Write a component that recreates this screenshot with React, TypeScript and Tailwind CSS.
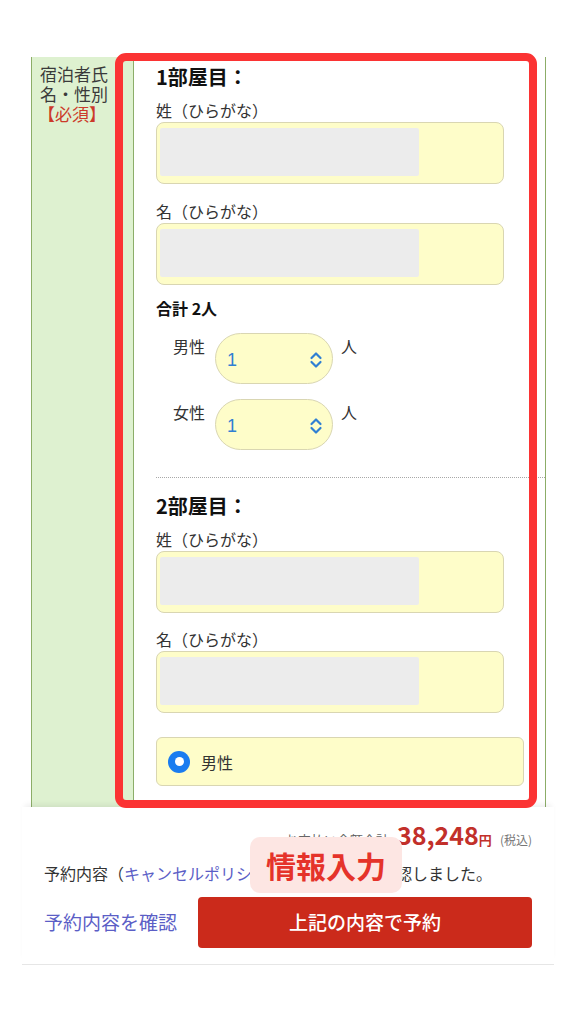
import React from "react";

function NameInput() {
  return (
    <div className="w-[348px] h-[62px] rounded-[8px] border border-[#d9d6b2] bg-[#fefdc9] pl-[3px] pt-[5px]">
      <div className="w-[259px] h-[48px] bg-[#ececec] rounded-[2px]" />
    </div>
  );
}

function Chevrons() {
  return (
    <svg width="14" height="18" viewBox="0 0 14 18" fill="none">
      <path d="M2.5 7 L7 2.5 L11.5 7" stroke="#2f7fd3" strokeWidth="2.2" strokeLinecap="round" strokeLinejoin="round" />
      <path d="M2.5 11 L7 15.5 L11.5 11" stroke="#2f7fd3" strokeWidth="2.2" strokeLinecap="round" strokeLinejoin="round" />
    </svg>
  );
}

function SelectRow({ label, className }: { label: string; className: string }) {
  return (
    <div className={"flex items-start " + className}>
      <div className="ml-[17px] w-[32px] text-[16px] leading-[24px] mt-[1px]">{label}</div>
      <div className="ml-[10px] w-[118px] h-[51px] rounded-full border border-[#d9d6b2] bg-[#fefdc9] flex items-center justify-between pl-[11px] pr-[9px] pt-[3px]">
        <span className="text-[18px] text-[#2f7fd3] font-['Liberation_Sans',sans-serif]">1</span>
        <Chevrons />
      </div>
      <div className="ml-[8px] text-[16px] leading-[24px] mt-[1px]">人</div>
    </div>
  );
}

function Label({ children, className }: { children: React.ReactNode; className: string }) {
  return <div className={"text-[16px] leading-[24px] text-[#333] " + className}>{children}</div>;
}

export default function App() {
  return (
    <div className="relative w-[576px] h-[1024px] bg-white overflow-hidden font-['Noto_Sans_CJK_JP',sans-serif] text-[#333]">
      <div className="h-[57px]" />
      <div className="ml-[31px] w-[515px] h-[750px] overflow-hidden flex border-l border-r border-[#8cad68]">
        <div className="w-[102px] shrink-0 bg-[#def1d0] border-r border-[#8cad68] pl-[8px] pt-[7px] text-[17px] leading-[20px] text-[#3a3a3a]">
          <div>宿泊者氏</div>
          <div>名・性別</div>
          <div className="text-[#cc3a2a] -ml-[2px]">【必須】</div>
        </div>
        <div className="flex-1 bg-white pl-[22px]">
          <div className="pt-[6px] text-[20px] leading-[28px] font-bold text-[#111]">1部屋目：</div>
          <Label className="mt-[7px]">姓（ひらがな）</Label>
          <NameInput />
          <Label className="mt-[15px]">名（ひらがな）</Label>
          <NameInput />
          <div className="mt-[11px] text-[16px] leading-[24px] font-bold text-[#111]">合計 2人</div>
          <SelectRow label="男性" className="mt-[13px]" />
          <SelectRow label="女性" className="mt-[15px]" />
          <div className="mt-[27px] border-t border-dotted border-[#a8a8a8]" />
          <div className="mt-[14px] text-[20px] leading-[28px] font-bold text-[#111]">2部屋目：</div>
          <Label className="mt-[7px]">姓（ひらがな）</Label>
          <NameInput />
          <Label className="mt-[14px]">名（ひらがな）</Label>
          <NameInput />
          <div className="mt-[24px] w-[368px] h-[49px] rounded-[6px] border border-[#d9d6b2] bg-[#fefdc9] flex items-center pl-[11px]">
            <div className="w-[22px] h-[22px] rounded-full bg-[#1a7cf0] flex items-center justify-center">
              <div className="w-[9px] h-[9px] rounded-full bg-white" />
            </div>
            <span className="ml-[11px] text-[16px] text-[#333]">男性</span>
          </div>
        </div>
      </div>

      <div className="relative mx-[22px] bg-white border-b border-[#e6e6e6] shadow-[0_-5px_6px_-3px_rgba(0,0,0,0.08)] px-[22px] pt-[12px] pb-[16px]">
        <div className="flex items-baseline justify-end h-[30px]">
          <span className="text-[13px] text-[#666] mr-[8px]">お支払い金額合計</span>
          <span className="text-[25px] font-bold text-[#c2302a] leading-[30px]">38,248</span>
          <span className="text-[13px] font-bold text-[#c2302a]">円</span>
          <span className="ml-[8px] text-[12px] text-[#777]">(税込)</span>
        </div>
        <div className="mt-[12px] text-[16px] leading-[24px] text-[#333] whitespace-nowrap">
          予約内容（<span className="text-[#5b5ec6]">キャンセルポリシー・宿泊約款</span>）を確認しました。
        </div>
        <div className="mt-[12px] flex items-center">
          <span className="text-[19px] text-[#5b5ec6] whitespace-nowrap">予約内容を確認</span>
          <div className="ml-[21px] flex-1 h-[51px] rounded-[4px] bg-[#cb2a1b] flex items-center justify-center text-white text-[19px] font-medium">
            上記の内容で予約
          </div>
        </div>
        <div className="absolute left-[228px] top-[30px] w-[152px] h-[56px] rounded-[10px] bg-[#fde6e3] flex items-center justify-center">
          <span className="text-[30px] font-bold text-[#e5332a] leading-none">情報入力</span>
        </div>
      </div>

      <div className="absolute left-[115px] top-[53px] w-[422px] h-[755px] border-[8px] border-[#fb3333] rounded-[11px] pointer-events-none" />
    </div>
  );
}
